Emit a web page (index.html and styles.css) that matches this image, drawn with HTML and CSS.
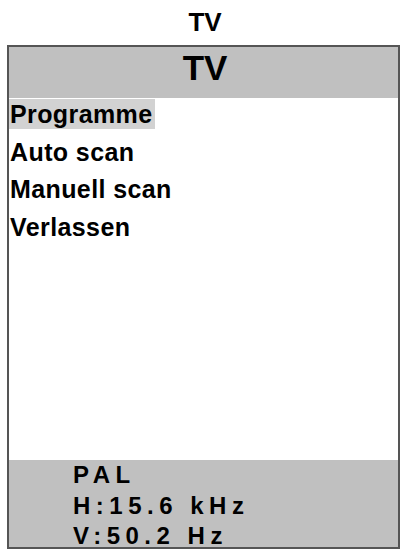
FILE: index.html
```html
<!DOCTYPE html>
<html lang="de">
<head>
<meta charset="utf-8">
<title>TV</title>
<link rel="stylesheet" href="styles.css">
</head>
<body>
<div class="title">TV</div>
<div class="panel">
  <div class="header">TV</div>
  <div class="menu">
    <div class="item"><span class="sel">Programme</span></div>
    <div class="item">Auto scan</div>
    <div class="item">Manuell scan</div>
    <div class="item">Verlassen</div>
  </div>
  <div class="footer">
    <div class="line">PAL</div>
    <div class="line">H:15.6 kHz</div>
    <div class="line">V:50.2 Hz</div>
  </div>
</div>
</body>
</html>
```
FILE: styles.css
```css
html, body {
  margin: 0;
  padding: 0;
  background: #ffffff;
}
body {
  font-family: "Liberation Sans", Arial, sans-serif;
  font-weight: bold;
  color: #000;
  width: 403px;
  height: 551px;
  overflow: hidden;
}
.title {
  margin-left: 7px;
  width: 393px;
  box-sizing: border-box;
  padding-left: 3px;
  height: 45px;
  line-height: 45px;
  font-size: 26px;
  text-align: center;
}
.panel {
  margin-left: 7px;
  width: 393px;
  height: 504px;
  box-sizing: border-box;
  border: 2px solid #555555;
  display: flex;
  flex-direction: column;
}
.header {
  background: #c0c0c0;
  height: 51px;
  box-sizing: border-box;
  padding-left: 3px;
  line-height: 42px;
  font-size: 35px;
  text-align: center;
}
.menu {
  flex: 1;
  padding-top: 1px;
  display: flex;
  flex-direction: column;
  gap: 7.5px;
}
.item {
  height: 30px;
  line-height: 30px;
  font-size: 25px;
  letter-spacing: 0.4px;
  padding-left: 1px;
}
.sel {
  display: inline-block;
  background: #d2d2d2;
  margin-left: -1px;
  padding-left: 1px;
  padding-right: 2px;
}
.footer {
  background: #c0c0c0;
  height: 87px;
  box-sizing: border-box;
  padding-left: 64px;
  font-size: 24px;
  line-height: 30.5px;
  letter-spacing: 5.5px;
}
```
